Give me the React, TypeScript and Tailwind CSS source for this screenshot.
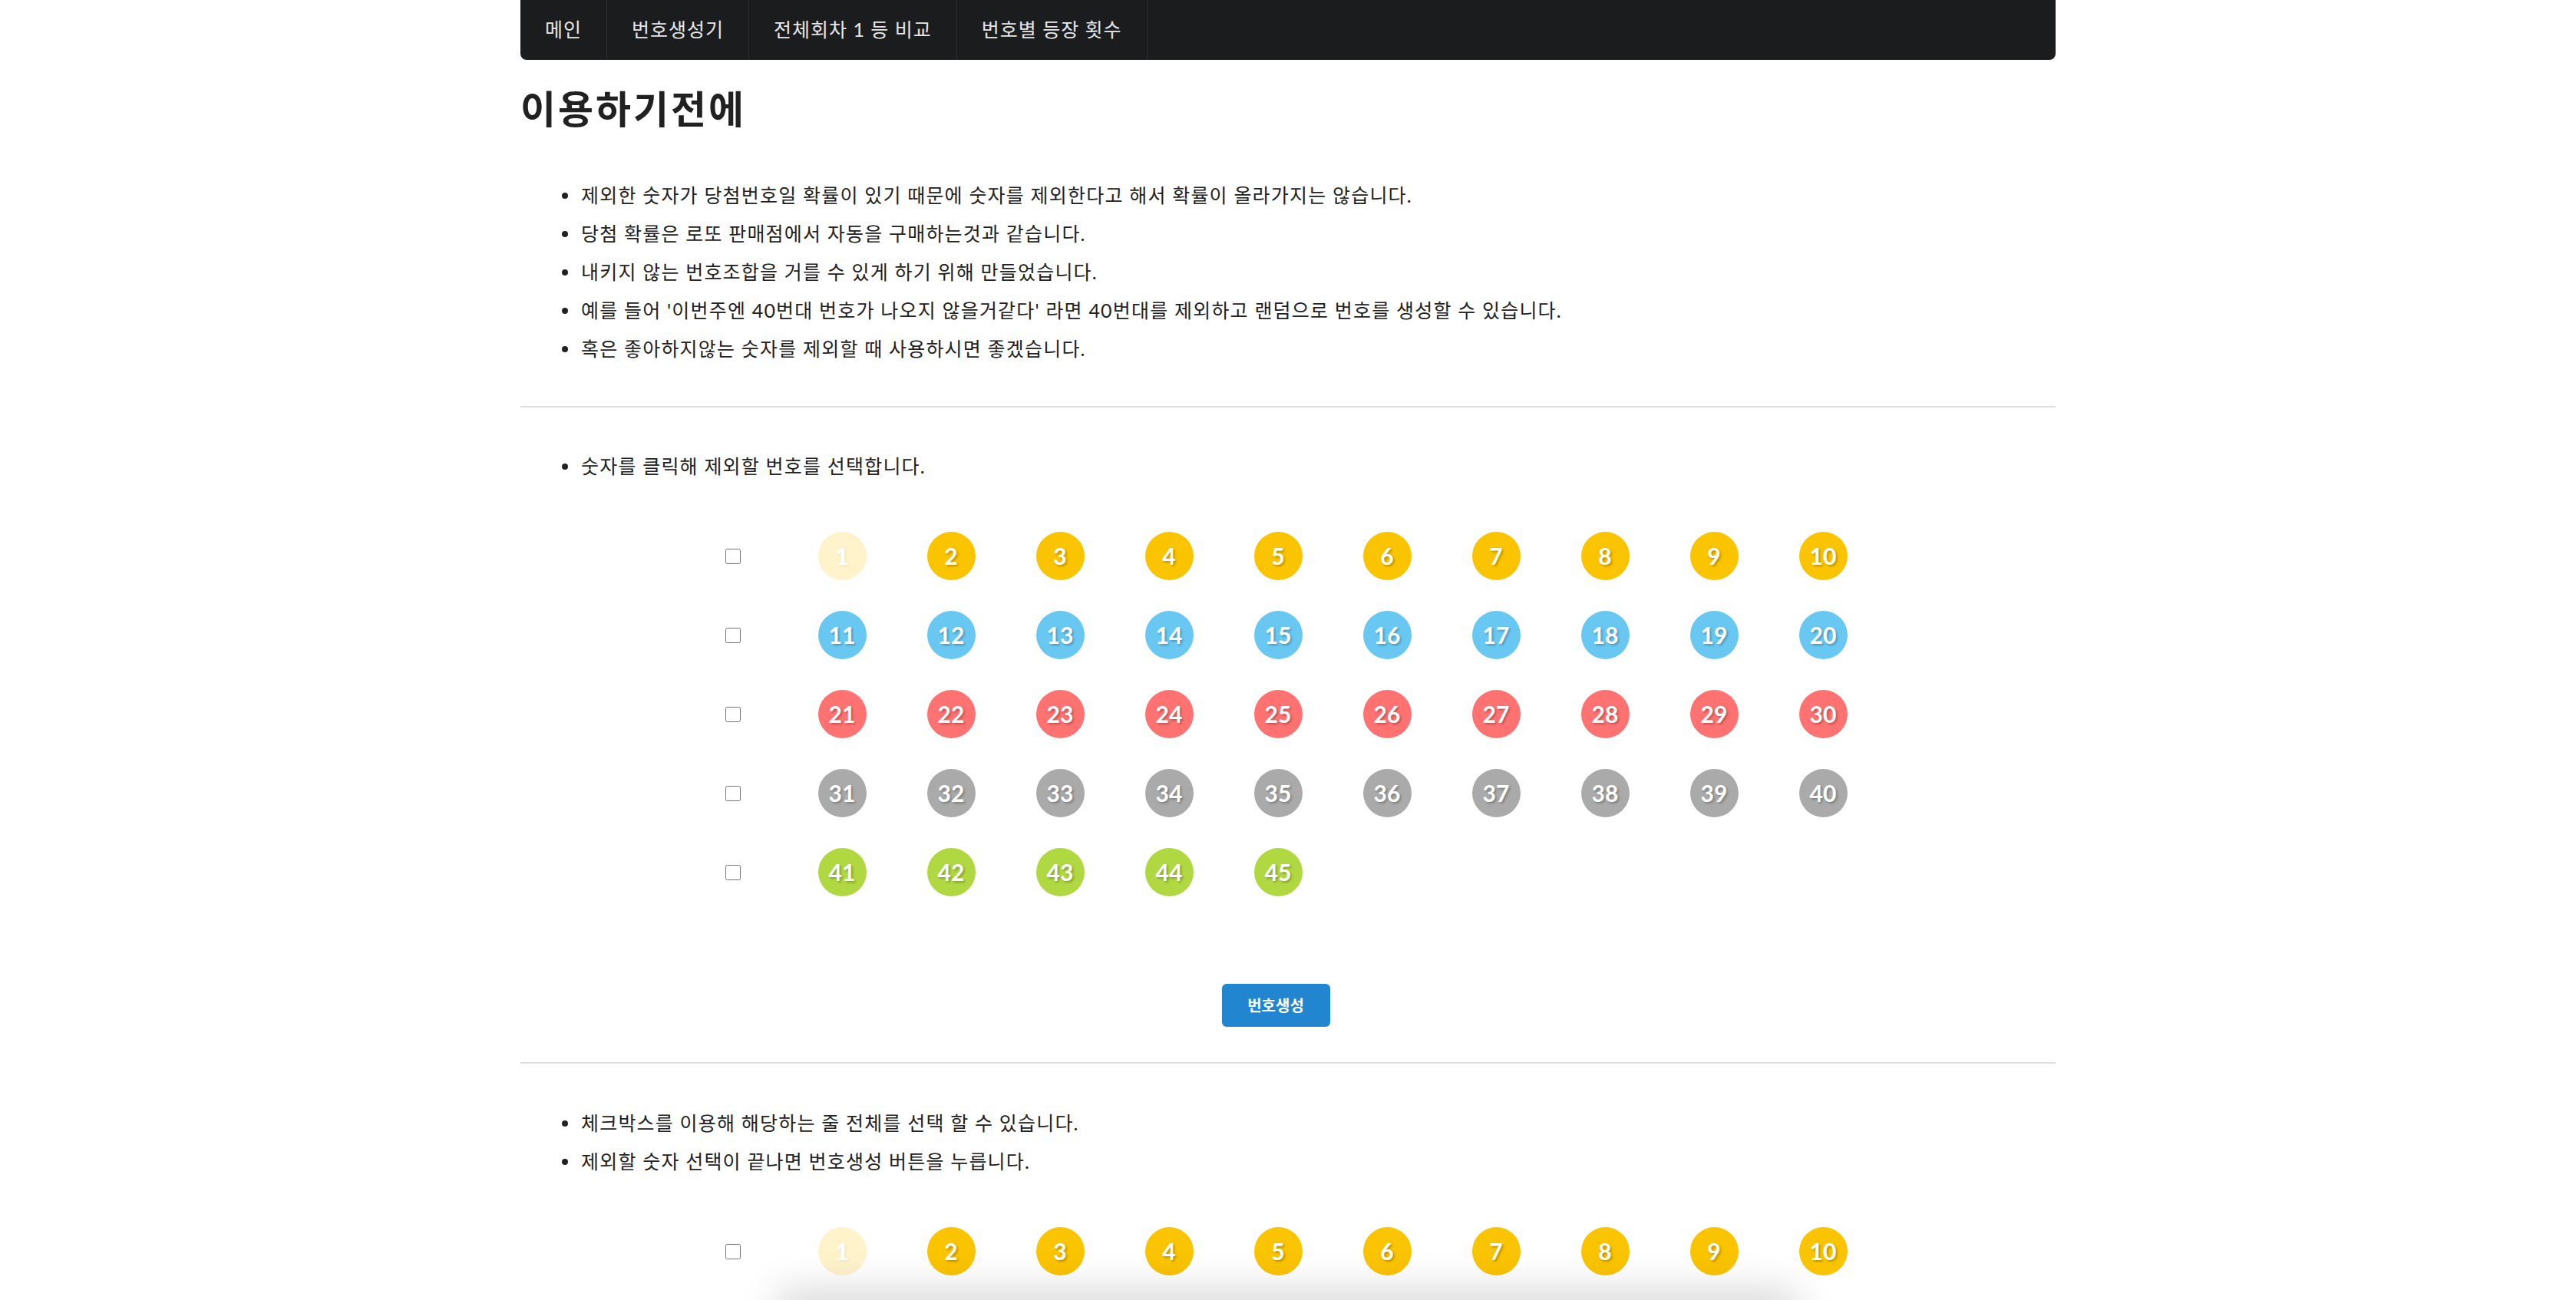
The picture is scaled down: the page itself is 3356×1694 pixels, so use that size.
import React, { useState } from 'react';

const FONT = 'font-["Lato","Noto_Sans_CJK_KR",sans-serif]';

const notes = [
  '제외한 숫자가 당첨번호일 확률이 있기 때문에 숫자를 제외한다고 해서 확률이 올라가지는 않습니다.',
  '당첨 확률은 로또 판매점에서 자동을 구매하는것과 같습니다.',
  '내키지 않는 번호조합을 거를 수 있게 하기 위해 만들었습니다.',
  "예를 들어 '이번주엔 40번대 번호가 나오지 않을거같다' 라면 40번대를 제외하고 랜덤으로 번호를 생성할 수 있습니다.",
  '혹은 좋아하지않는 숫자를 제외할 때 사용하시면 좋겠습니다.',
];

const rowColors = ['bg-[#fbc400]', 'bg-[#69c8f2]', 'bg-[#ff7272]', 'bg-[#aaaaaa]', 'bg-[#b0d840]'];

function Bullets({ items }: { items: string[] }) {
  return (
    <ul className="pl-[54px]">
      {items.map((t) => (
        <li key={t} className="flex items-center h-[50px] text-[25px] tracking-[1.2px] text-[#212121]">
          <span className="w-2 h-2 rounded-full bg-[#212121] mr-[17px] shrink-0" />
          {t}
        </li>
      ))}
    </ul>
  );
}

function Ball({ n, off, onClick }: { n: number; off: boolean; onClick: () => void }) {
  const color = rowColors[Math.floor((n - 1) / 10)];
  return (
    <button
      onClick={onClick}
      className={`w-[63px] h-[63px] rounded-full ${color} ${off ? 'opacity-20' : ''} flex items-center justify-center text-white font-bold text-[30px] font-["Lato",sans-serif] [text-shadow:2px_2px_3px_rgba(0,0,0,0.25)]`}
    >
      {n}
    </button>
  );
}

function BallGrid() {
  const [excluded, setExcluded] = useState<number[]>([1]);
  const toggle = (n: number) =>
    setExcluded(excluded.includes(n) ? excluded.filter((x) => x !== n) : [...excluded, n]);

  return (
    <div className="w-fit mx-auto grid grid-cols-[116px_repeat(10,142px)]">
      {[0, 1, 2, 3, 4].map((row) => (
        <React.Fragment key={row}>
          <div className="h-[103px] flex items-center pl-[35px]">
            <input type="checkbox" className="w-5 h-5" />
          </div>
          {Array.from({ length: 10 }, (_, i) => row * 10 + i + 1).map((n) => (
            <div key={n} className="h-[103px] flex items-center justify-center">
              {n <= 45 && <Ball n={n} off={excluded.includes(n)} onClick={() => toggle(n)} />}
            </div>
          ))}
        </React.Fragment>
      ))}
    </div>
  );
}

export default function App() {
  return (
    <div className={`min-h-screen bg-white ${FONT}`}>
      <div className="w-[2000px] mx-auto">
        <nav className="h-[78px] bg-[#1b1c1d] rounded-b-lg flex text-[25px] tracking-[1px] text-white/90">
          {['메인', '번호생성기', '전체회차 1 등 비교', '번호별 등장 횟수'].map((label) => (
            <a key={label} className="px-8 flex items-center border-r border-white/[0.08] cursor-pointer">
              {label}
            </a>
          ))}
        </nav>

        <h1 className="mt-[35px] leading-[58px] text-[50px] tracking-[3px] font-bold text-[#212121]">이용하기전에</h1>

        <div className="mt-[59px]">
          <Bullets items={notes} />
        </div>

        <hr className="mt-[49px] border-t-2 border-[#dededf]" />

        <div className="mt-[52px]">
          <Bullets items={['숫자를 클릭해 제외할 번호를 선택합니다.']} />
        </div>

        <div className="mt-[40px]">
          <BallGrid />
        </div>

        <div className="mt-[94px] flex justify-center pr-[32px]">
          <button className="w-[141px] h-[56px] rounded-md bg-[#2185d0] text-white font-bold text-[20px]">
            번호생성
          </button>
        </div>

        <hr className="mt-[46px] border-t-2 border-[#dededf]" />

        <div className="mt-[53px]">
          <Bullets
            items={['체크박스를 이용해 해당하는 줄 전체를 선택 할 수 있습니다.', '제외할 숫자 선택이 끝나면 번호생성 버튼을 누릅니다.']}
          />
        </div>

        <div className="mt-[40px]">
          <BallGrid />
        </div>

        <div className="mt-[94px] pb-[200px] flex justify-center pr-[32px]">
          <button className="w-[141px] h-[56px] rounded-md bg-[#2185d0] text-white font-bold text-[20px]">
            번호생성
          </button>
        </div>
      </div>

      <div className="fixed left-1/2 -translate-x-1/2 bottom-[-80px] h-[80px] w-[1300px] bg-white shadow-[0_0_50px_14px_rgba(0,0,0,0.15)]" />
    </div>
  );
}
